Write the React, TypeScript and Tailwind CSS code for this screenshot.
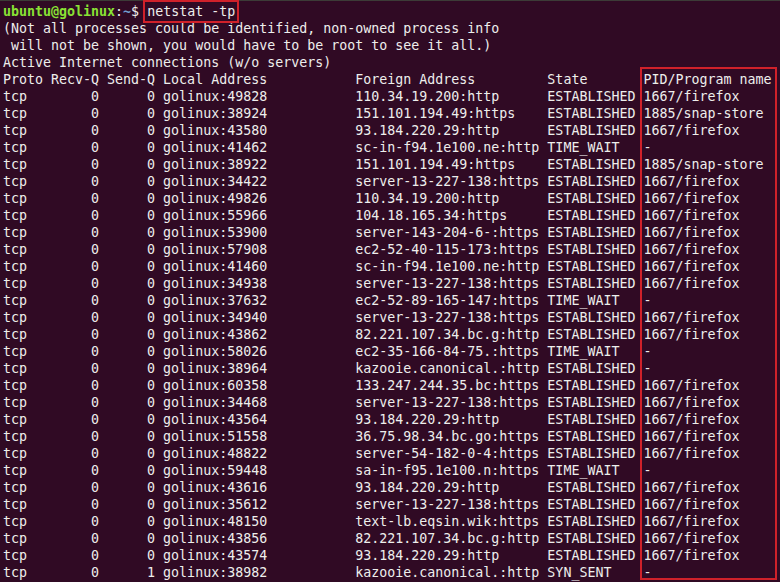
type Row = {
  local: string;
  foreign: string;
  state: string;
  pid: string;
  sendQ?: string;
};

const rows: Row[] = [
  { local: "49828", foreign: "110.34.19.200:http", state: "ESTABLISHED", pid: "1667/firefox" },
  { local: "38924", foreign: "151.101.194.49:https", state: "ESTABLISHED", pid: "1885/snap-store" },
  { local: "43580", foreign: "93.184.220.29:http", state: "ESTABLISHED", pid: "1667/firefox" },
  { local: "41462", foreign: "sc-in-f94.1e100.ne:http", state: "TIME_WAIT", pid: "-" },
  { local: "38922", foreign: "151.101.194.49:https", state: "ESTABLISHED", pid: "1885/snap-store" },
  { local: "34422", foreign: "server-13-227-138:https", state: "ESTABLISHED", pid: "1667/firefox" },
  { local: "49826", foreign: "110.34.19.200:http", state: "ESTABLISHED", pid: "1667/firefox" },
  { local: "55966", foreign: "104.18.165.34:https", state: "ESTABLISHED", pid: "1667/firefox" },
  { local: "53900", foreign: "server-143-204-6-:https", state: "ESTABLISHED", pid: "1667/firefox" },
  { local: "57908", foreign: "ec2-52-40-115-173:https", state: "ESTABLISHED", pid: "1667/firefox" },
  { local: "41460", foreign: "sc-in-f94.1e100.ne:http", state: "ESTABLISHED", pid: "1667/firefox" },
  { local: "34938", foreign: "server-13-227-138:https", state: "ESTABLISHED", pid: "1667/firefox" },
  { local: "37632", foreign: "ec2-52-89-165-147:https", state: "TIME_WAIT", pid: "-" },
  { local: "34940", foreign: "server-13-227-138:https", state: "ESTABLISHED", pid: "1667/firefox" },
  { local: "43862", foreign: "82.221.107.34.bc.g:http", state: "ESTABLISHED", pid: "1667/firefox" },
  { local: "58026", foreign: "ec2-35-166-84-75.:https", state: "TIME_WAIT", pid: "-" },
  { local: "38964", foreign: "kazooie.canonical.:http", state: "ESTABLISHED", pid: "-" },
  { local: "60358", foreign: "133.247.244.35.bc:https", state: "ESTABLISHED", pid: "1667/firefox" },
  { local: "34468", foreign: "server-13-227-138:https", state: "ESTABLISHED", pid: "1667/firefox" },
  { local: "43564", foreign: "93.184.220.29:http", state: "ESTABLISHED", pid: "1667/firefox" },
  { local: "51558", foreign: "36.75.98.34.bc.go:https", state: "ESTABLISHED", pid: "1667/firefox" },
  { local: "48822", foreign: "server-54-182-0-4:https", state: "ESTABLISHED", pid: "1667/firefox" },
  { local: "59448", foreign: "sa-in-f95.1e100.n:https", state: "TIME_WAIT", pid: "-" },
  { local: "43616", foreign: "93.184.220.29:http", state: "ESTABLISHED", pid: "1667/firefox" },
  { local: "35612", foreign: "server-13-227-138:https", state: "ESTABLISHED", pid: "1667/firefox" },
  { local: "48150", foreign: "text-lb.eqsin.wik:https", state: "ESTABLISHED", pid: "1667/firefox" },
  { local: "43856", foreign: "82.221.107.34.bc.g:http", state: "ESTABLISHED", pid: "1667/firefox" },
  { local: "43574", foreign: "93.184.220.29:http", state: "ESTABLISHED", pid: "1667/firefox" },
  { local: "38982", foreign: "kazooie.canonical.:http", state: "SYN_SENT", pid: "-", sendQ: "1" },
];

// netstat column layout: proto 5, recv-q 6, send-q 6, local 23, foreign 23, state 11
const formatRow = (r: Row) =>
  "tcp".padEnd(5) +
  " " +
  "0".padStart(6) +
  " " +
  (r.sendQ ?? "0").padStart(6) +
  " " +
  ("golinux:" + r.local).padEnd(23) +
  " " +
  r.foreign.padEnd(23) +
  " " +
  r.state.padEnd(11) +
  " " +
  r.pid;

const header =
  "Proto Recv-Q Send-Q Local Address           Foreign Address         State       PID/Program name";

export default function App() {
  return (
    <div className="w-[780px] h-[582px] overflow-hidden bg-[#300a24] text-[#eeeeec]">
      <div className="h-px bg-[#3c3b37]" />
      <pre
        className="pl-[3px] pt-[2px] text-[13.3px] leading-[17px] whitespace-pre"
        style={{ fontFamily: '"DejaVu Sans Mono", "Liberation Mono", monospace' }}
      >
        <div>
          <span className="font-bold text-[#8ae234]">ubuntu@golinux</span>
          <span>:</span>
          <span className="font-bold text-[#729fcf]">~</span>
          <span>$ </span>
          <span className="outline-2 outline-offset-2 outline-[#d0212a]">netstat -tp</span>
        </div>
        <div>(Not all processes could be identified, non-owned process info</div>
        <div> will not be shown, you would have to be root to see it all.)</div>
        <div>Active Internet connections (w/o servers)</div>
        <div className="relative">
          {/* red annotation box around PID column */}
          <div className="absolute left-[637px] right-[3px] top-[-4px] h-[513px] border-2 border-[#d0212a]" />
          <div>{header}</div>
          {rows.map((r, i) => (
            <div key={i}>{formatRow(r)}</div>
          ))}
        </div>
      </pre>
    </div>
  );
}
